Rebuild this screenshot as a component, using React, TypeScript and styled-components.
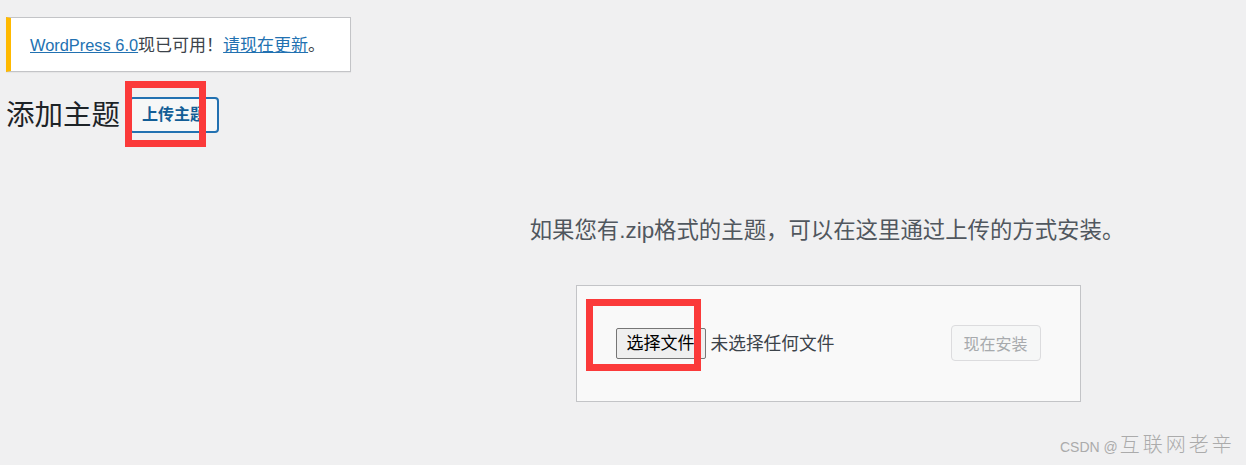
import React from 'react';
import styled, { createGlobalStyle } from 'styled-components';

const GlobalStyle = createGlobalStyle`
    html, body {
        margin: 0;
        padding: 0;
        background: #f0f0f1;
    }
    body {
        font-family: "Liberation Sans", "Noto Sans CJK SC", sans-serif;
        color: #3c434a;
    }
`

export default function App() {
    return (
        <Page>
            <GlobalStyle />
            <Notice>
                <NoticeText>
                    <Link href="#"><Latin>WordPress 6.0</Latin></Link>现已可用！<Link href="#">请现在更新</Link>。
                </NoticeText>
            </Notice>
            <HeadRow>
                <Title>添加主题</Title>
                <UploadBtn>
                    上传主题
                    <Mark $left={-6} $top={-18} $w={81} $h={66} />
                </UploadBtn>
            </HeadRow>
            <UploadArea>
                <Help>如果您有.zip格式的主题，可以在这里通过上传的方式安装。</Help>
                <UploadForm>
                    <FileField>
                        <FileBtn>
                            选择文件
                            <Mark $left={-31} $top={-30} $w={115} $h={72} />
                        </FileBtn>
                        <FileName>未选择任何文件</FileName>
                    </FileField>
                    <InstallBtn disabled>现在安装</InstallBtn>
                </UploadForm>
            </UploadArea>
            <Watermark>
                CSDN @<WmCjk>互联网老辛</WmCjk>
            </Watermark>
        </Page>
    );
}

const Page = styled.div`
    position: relative;
    height: 465px;
    padding: 17px 0 0 6px;
    box-sizing: border-box;
    overflow: hidden;
`

const Notice = styled.div`
    width: 345px;
    height: 55px;
    box-sizing: border-box;
    background: #fff;
    border: 1px solid #c3c4c7;
    border-left: 5px solid #ffb900;
    box-shadow: 0 1px 1px rgba(0, 0, 0, 0.04);
    padding-left: 19px;
    display: flex;
    align-items: center;
`

const NoticeText = styled.p`
    margin: 0;
    font-size: 17px;
    line-height: 20px;
    color: #3c434a;
    padding-top: 2px;
    white-space: nowrap;
`

const Latin = styled.span`
    font-size: 16.4px;
`

const Link = styled.a`
    color: #2271b1;
    text-decoration: underline;
`

const HeadRow = styled.div`
    display: flex;
    align-items: center;
    gap: 9px;
    margin-top: 25px;
`

const Title = styled.h1`
    margin: 0;
    font-size: 28.5px;
    font-weight: 400;
    line-height: 35px;
    color: #1d2327;
`

const UploadBtn = styled.button`
    position: relative;
    width: 90px;
    height: 36px;
    box-sizing: border-box;
    border: 2px solid #2271b1;
    border-radius: 4px;
    background: #f6f7f7;
    color: #135e96;
    font-family: "Liberation Sans", "Noto Sans CJK SC", sans-serif;
    font-size: 16px;
    font-weight: 700;
    padding: 0;
    line-height: 32px;
`

const Mark = styled.span<{ $left: number; $top: number; $w: number; $h: number }>`
    position: absolute;
    left: ${({ $left }) => $left}px;
    top: ${({ $top }) => $top}px;
    width: ${({ $w }) => $w}px;
    height: ${({ $h }) => $h}px;
    box-sizing: border-box;
    border: 7px solid #fb3a3a;
    pointer-events: none;
`

const UploadArea = styled.div`
    margin-left: 404px;
    display: flex;
    flex-direction: column;
    align-items: center;
`

const Help = styled.p`
    margin: 83px 2px 0 0;
    font-size: 22.4px;
    line-height: 30px;
    color: #50575e;
    white-space: nowrap;
`

const UploadForm = styled.div`
    margin-top: 39px;
    width: 505px;
    height: 117px;
    box-sizing: border-box;
    padding: 0 39px;
    background: #f9f9f9;
    border: 1px solid #c3c4c7;
    display: flex;
    align-items: center;
    justify-content: space-between;
`

const FileField = styled.div`
    display: flex;
    align-items: center;
    gap: 5px;
`

const FileBtn = styled.button`
    position: relative;
    width: 90px;
    height: 31px;
    box-sizing: border-box;
    border: 1px solid #767676;
    border-radius: 2px;
    background: #efefef;
    color: #000;
    font-family: "Liberation Sans", "Noto Sans CJK SC", sans-serif;
    font-size: 17px;
    line-height: 28px;
    padding: 0;
`

const FileName = styled.span`
    font-size: 17.7px;
    line-height: 24px;
    color: #3c434a;
`

const InstallBtn = styled.button`
    width: 90px;
    height: 36px;
    margin-top: -2px;
    box-sizing: border-box;
    border: 1px solid #dcdcde;
    border-radius: 4px;
    background: #f6f7f7;
    color: #a7aaad;
    font-family: "Liberation Sans", "Noto Sans CJK SC", sans-serif;
    font-size: 16px;
    padding: 0;
`

const Watermark = styled.div`
    position: absolute;
    left: 1060px;
    top: 433px;
    font-size: 14px;
    line-height: 24px;
    color: #ababab;
    white-space: nowrap;
`

const WmCjk = styled.span`
    font-size: 20px;
    font-weight: 300;
    letter-spacing: 3px;
    margin-left: 2px;
`
